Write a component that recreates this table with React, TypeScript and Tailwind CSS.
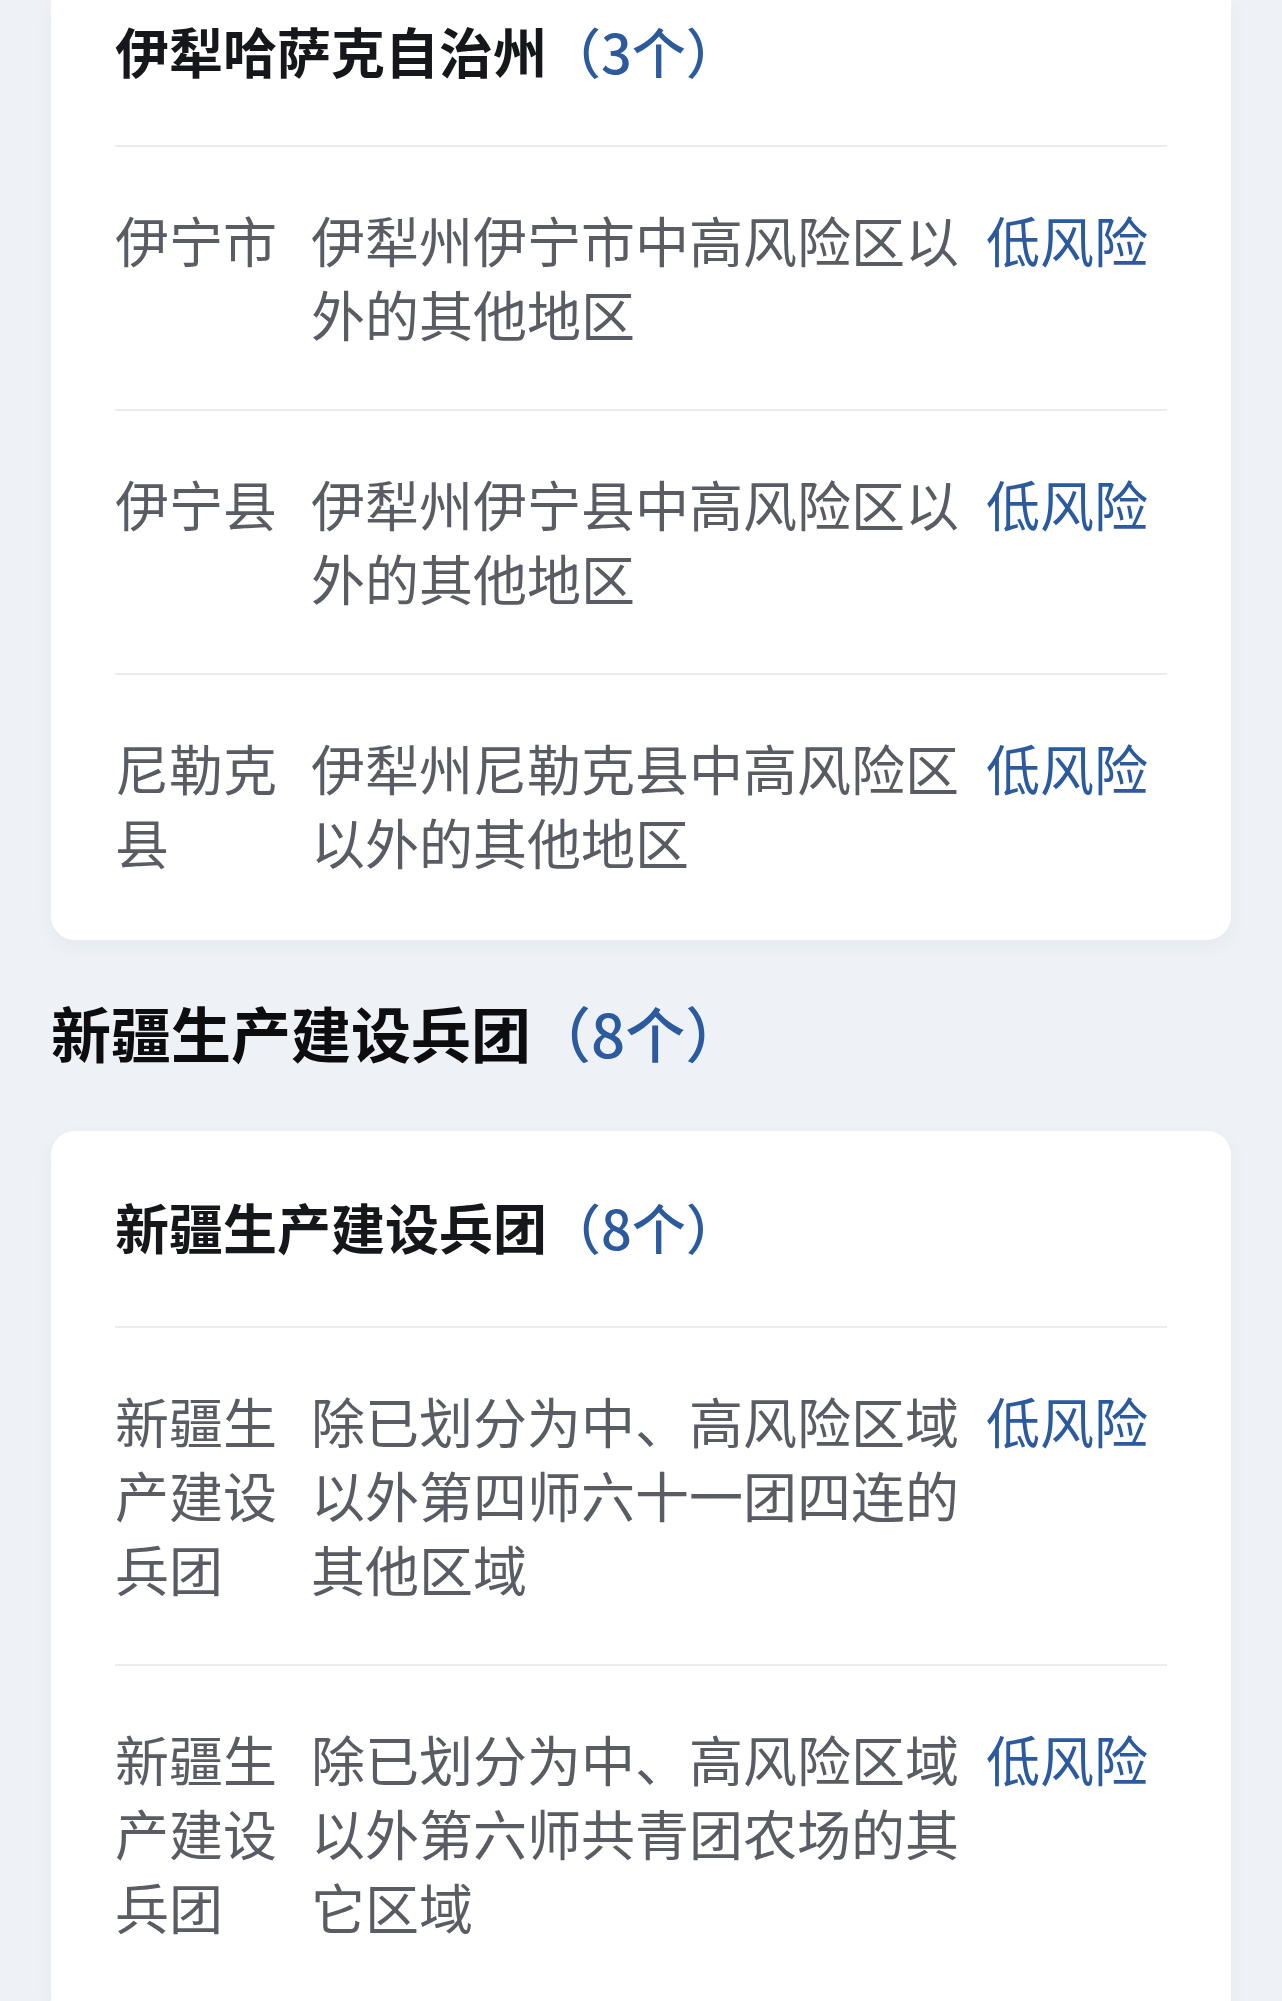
import React from 'react'

type Area = {
  name: string
  desc: string
  level: string
}

type Group = {
  title: string
  count: number
  areas: Area[]
}

const ili: Group = {
  title: '伊犁哈萨克自治州',
  count: 3,
  areas: [
    { name: '伊宁市', desc: '伊犁州伊宁市中高风险区以外的其他地区', level: '低风险' },
    { name: '伊宁县', desc: '伊犁州伊宁县中高风险区以外的其他地区', level: '低风险' },
    { name: '尼勒克县', desc: '伊犁州尼勒克县中高风险区以外的其他地区', level: '低风险' },
  ],
}

const bingtuan: Group = {
  title: '新疆生产建设兵团',
  count: 8,
  areas: [
    { name: '新疆生产建设兵团', desc: '除已划分为中、高风险区域以外第四师六十一团四连的其他区域', level: '低风险' },
    { name: '新疆生产建设兵团', desc: '除已划分为中、高风险区域以外第六师共青团农场的其它区域', level: '低风险' },
  ],
}

const font = 'font-["Noto_Sans_CJK_SC","Noto_Sans",sans-serif]'

function AreaRow({ area }: { area: Area }) {
  return (
    <div className="flex items-start border-t-2 border-[#ececee] pt-[56px] pb-[58px] text-[54px] leading-[74px]">
      <div className="w-[196px] shrink-0 pr-[20px] text-[#5a5c64]">{area.name}</div>
      <div className="w-[675px] shrink-0 pr-[18px] text-[#5a5c64]">{area.desc}</div>
      <div className="flex-1 text-[#2b5a9e]">{area.level}</div>
    </div>
  )
}

function GroupCard({ group, first }: { group: Group; first?: boolean }) {
  return (
    <div
      className={
        first
          ? 'bg-white rounded-b-[24px] px-[64px] pb-[3px] shadow-[0_6px_18px_rgba(30,50,80,0.05)]'
          : 'bg-white rounded-t-[24px] px-[64px] shadow-[0_6px_18px_rgba(30,50,80,0.05)]'
      }
    >
      <div className={first ? 'pt-[14px] pb-[57px]' : 'pt-[59px] pb-[62px]'}>
        <h3 className="text-[54px] leading-[74px] font-bold text-[#16171a]">
          {group.title}
          <span className="font-medium text-[#2b5a9e]">（{group.count}个）</span>
        </h3>
      </div>
      {group.areas.map((a, i) => (
        <AreaRow key={i} area={a} />
      ))}
    </div>
  )
}

export default function App() {
  return (
    <div className={`min-h-screen bg-[#eef2f6] px-[51px] ${font}`}>
      <GroupCard group={ili} first />

      {/* 兵团 */}
      <h2 className="mt-[52px] mb-[59px] text-[60px] leading-[80px] font-bold text-[#0d0d0f]">
        {bingtuan.title}
        <span className="font-medium text-[#2b5a9e]">（{bingtuan.count}个）</span>
      </h2>

      <GroupCard group={bingtuan} />
    </div>
  )
}
